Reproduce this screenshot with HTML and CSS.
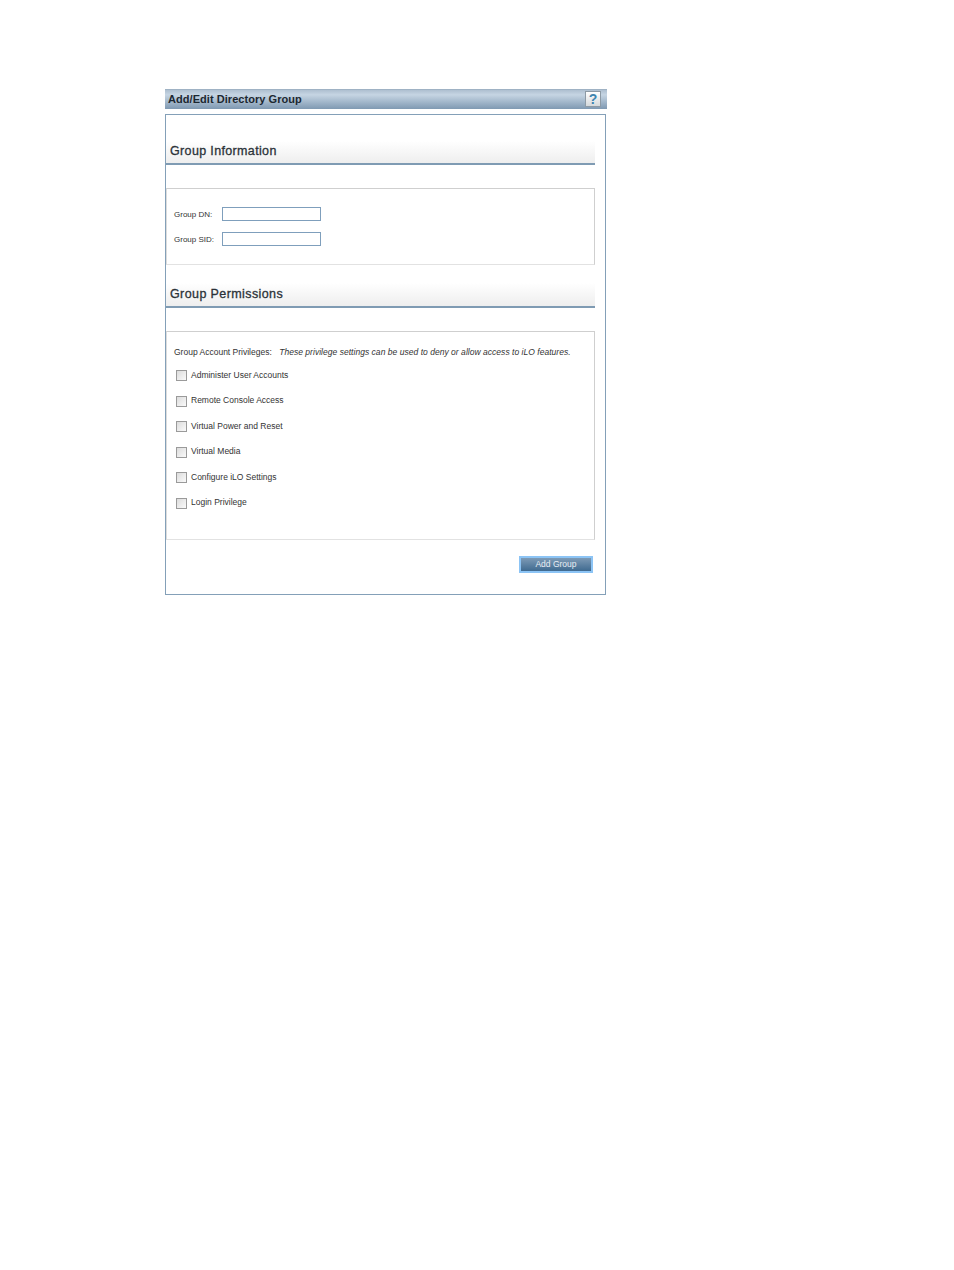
FILE: index.html
```html
<!DOCTYPE html>
<html lang="en">
<head>
    <meta charset="UTF-8">
    <title>Add/Edit Directory Group</title>
    <link rel="stylesheet" href="styles.css">
</head>
<body>
    <div class="dialog">
        <div class="title-bar">
            <span>Add/Edit Directory Group</span>
            <div class="help-btn">?</div>
        </div>
        <div class="panel">
            <h2 class="section-head first">Group Information</h2>
            <div class="box info-box">
                <div class="field">
                    <label>Group DN:</label>
                    <input type="text" class="text-input">
                </div>
                <div class="field">
                    <label>Group SID:</label>
                    <input type="text" class="text-input">
                </div>
            </div>
            <h2 class="section-head second">Group Permissions</h2>
            <div class="box perm-box">
                <p class="note"><span class="note-label">Group Account Privileges:</span> <em>These privilege settings can be used to deny or allow access to iLO features.</em></p>
                <div class="check-row"><span class="check"></span>Administer User Accounts</div>
                <div class="check-row"><span class="check"></span>Remote Console Access</div>
                <div class="check-row"><span class="check"></span>Virtual Power and Reset</div>
                <div class="check-row"><span class="check"></span>Virtual Media</div>
                <div class="check-row"><span class="check"></span>Configure iLO Settings</div>
                <div class="check-row"><span class="check"></span>Login Privilege</div>
            </div>
            <div class="actions">
                <button class="add-btn">Add Group</button>
            </div>
        </div>
    </div>
</body>
</html>
```

FILE: styles.css
```css
body {
    margin: 0;
    padding: 89px 0 0 165px;
    background-color: #fff;
    font-family: "Liberation Sans", Arial, sans-serif;
    color: #333;
}

.dialog {
    width: 442px;
}

.title-bar {
    height: 20px;
    box-sizing: border-box;
    display: flex;
    align-items: center;
    justify-content: space-between;
    padding: 0 6px 2px 3px;
    background: linear-gradient(#aebfd0, #c6d5e3 25%, #7f99b2);
    border-top: 1px solid #9fb2c4;
    font-size: 11px;
    font-weight: bold;
    letter-spacing: 0.05px;
    color: #1c2730;
}

.help-btn {
    width: 16px;
    height: 16px;
    box-sizing: border-box;
    border: 1px solid #8d9aa5;
    background: linear-gradient(#fff, #d5d9dc);
    color: #3f86b0;
    font-size: 14px;
    line-height: 14px;
    text-align: center;
}

.panel {
    width: 441px;
    height: 481px;
    margin-top: 5px;
    box-sizing: border-box;
    border: 1px solid #84a0b8;
    display: flex;
    flex-direction: column;
}

.section-head {
    margin: 0;
    width: 429px;
    box-sizing: border-box;
    padding-left: 4px;
    font-size: 12.5px;
    line-height: 15px;
    font-weight: normal;
    color: #2b3238;
    -webkit-text-stroke: 0.3px #2b3238;
    background: linear-gradient(#fff, #eeeeee);
    border-bottom: 2px solid #7f9bb3;
}

.section-head.first {
    height: 24px;
    margin-top: 26px;
    padding-top: 3px;
    letter-spacing: 0.35px;
}

.section-head.second {
    height: 25px;
    margin-top: 18px;
    padding-top: 4px;
    letter-spacing: 0.4px;
}

.box {
    width: 429px;
    box-sizing: border-box;
    border: 1px solid #cfcfcf;
    border-left-color: #dcdcdc;
    border-bottom-color: #e2e2e2;
    padding-left: 7px;
    font-size: 8.5px;
}

.info-box {
    height: 77px;
    margin-top: 23px;
    padding-top: 18px;
    font-size: 8px;
}

.field {
    display: flex;
    align-items: center;
    height: 14px;
    margin-bottom: 11px;
}

.field label {
    width: 48px;
}

.text-input {
    width: 99px;
    height: 14px;
    box-sizing: border-box;
    margin: 0;
    padding: 0;
    border: 1px solid #7f9fbc;
    background-color: #fff;
}

.perm-box {
    height: 209px;
    margin-top: 23px;
    padding-top: 15px;
}

.note {
    margin: 0 0 4px 0;
    line-height: 11px;
}

.note-label {
    margin-right: 5px;
}

.note em {
    letter-spacing: 0.03px;
}

.check-row {
    display: flex;
    align-items: center;
    height: 25.5px;
    padding-left: 2px;
}

.check {
    width: 11px;
    height: 11px;
    box-sizing: border-box;
    margin: 2px 4px 0 0;
    border: 1px solid #9a9a9a;
    background: linear-gradient(135deg, #dcdcdc, #fafafa);
}

.actions {
    display: flex;
    justify-content: flex-end;
    padding: 16px 12px 0 0;
}

.add-btn {
    width: 74px;
    height: 17px;
    box-sizing: border-box;
    padding: 0 0 2px 0;
    border: 2px solid #8cc4f5;
    background: linear-gradient(#7d9ab5, #3f6a90);
    color: #e8eef4;
    font-family: "Liberation Sans", Arial, sans-serif;
    font-size: 8.5px;
}
```
